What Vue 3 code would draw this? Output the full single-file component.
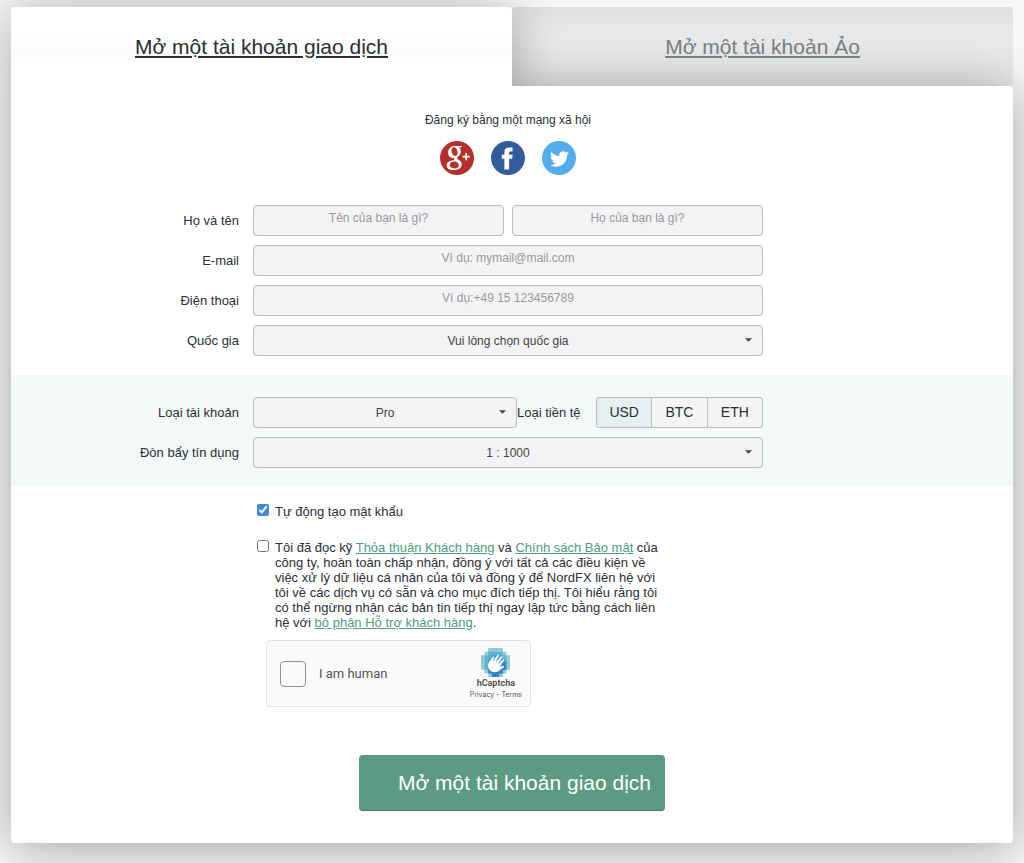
<template>
    <main class="page">
        <nav class="tabs">
            <div class="tab tab-active">
                <a href="#real">Mở một tài khoản giao dịch</a>
            </div>
            <div class="tab tab-idle">
                <a href="#demo">Mở một tài khoản Ảo</a>
            </div>
        </nav>

        <form class="panel" @submit.prevent>
            <section class="social">
                <p>Đăng ký bằng một mạng xã hội</p>
                <div class="social-icons">
                    <a href="#google" aria-label="Google+">
                        <svg viewBox="0 0 34 34">
                            <circle cx="17" cy="17" r="17" fill="#b5302a" />
                            <path
                                fill="#fff"
                                fill-rule="evenodd"
                                d="M14.600 5h7.900l-1.900 1.400h-1.900c1.400 1 2.200 2.500 2.200 4.200 0 2-1 3.300-2.300 4.300-1.300 1-1.500 1.400-1.500 2s.7 1.200 1.600 1.900c1.900 1.300 3.100 2.500 3.100 4.700 0 3-3 5.500-8 5.500-4.300 0-7.200-1.700-7.200-4.600 0-3.300 3.400-5.100 8-5.200-.6-.7-.8-1.300-.5-2.200-3.700.2-6-2.200-6-5.300C8.100 8 11 5 14.600 5zM14 6.200c-1.700 0-2.700 1.500-2.500 3.700.3 2.600 1.700 5 3.700 5 1.600 0 2.600-1.300 2.400-3.500C17.400 8.700 15.900 6.200 14 6.200zM15.300 20.400c-3.400 0-5.700 1.200-5.700 3.400 0 2 1.900 3.600 5 3.600 2.800 0 4.200-1.200 4.200-3.200 0-1.700-1.300-2.600-3-3.800z"
                            />
                            <path fill="none" stroke="#fff" stroke-width="1.7" d="M22.600 15.600h7.200M26.200 12v7.200" />
                        </svg>
                    </a>
                    <a href="#facebook" aria-label="Facebook">
                        <svg viewBox="0 0 34 34">
                            <circle cx="17" cy="17" r="17" fill="#335c9d" />
                            <path
                                fill="#fff"
                                d="M13.400 28.400V17.700h-2.600v-3.900h2.600v-2.500c0-3.300 1.900-4.700 4.900-4.700h3.200v4h-1.900c-1.100 0-1.500.5-1.500 1.500v1.700h3.500l-.4 3.900h-3.100v10.700z"
                            />
                        </svg>
                    </a>
                    <a href="#twitter" aria-label="Twitter">
                        <svg viewBox="0 0 34 34">
                            <circle cx="17" cy="17" r="17" fill="#54aceb" />
                            <path
                                fill="#fff"
                                transform="translate(8 8.5) scale(.79)"
                                d="M23.95 4.57a10 10 0 0 1-2.82.77 4.96 4.96 0 0 0 2.16-2.72c-.95.55-2 .95-3.13 1.18a4.92 4.92 0 0 0-8.38 4.48C7.69 8.1 4.07 6.13 1.64 3.16a4.92 4.92 0 0 0 1.52 6.57 4.9 4.9 0 0 1-2.23-.61v.06a4.92 4.92 0 0 0 3.95 4.83 5 5 0 0 1-2.21.08 4.94 4.94 0 0 0 4.6 3.42A9.87 9.87 0 0 1 0 19.54a13.99 13.99 0 0 0 7.55 2.21c9.05 0 14-7.5 14-13.98 0-.21 0-.42-.02-.63a9.94 9.94 0 0 0 2.46-2.55z"
                            />
                        </svg>
                    </a>
                </div>
            </section>

            <section class="fields">
                <div class="row">
                    <label class="caption" for="first-name">Họ và tên</label>
                    <div class="pair">
                        <input id="first-name" class="control" type="text" placeholder="Tên của bạn là gì?" />
                        <input class="control" type="text" placeholder="Họ của bạn là gì?" aria-label="Họ" />
                    </div>
                </div>
                <div v-for="field in fields" :key="field.id" class="row">
                    <label class="caption" :for="field.id">{{ field.label }}</label>
                    <input :id="field.id" class="control" :type="field.type" :placeholder="field.placeholder" />
                </div>
                <div class="row">
                    <label class="caption" for="country">Quốc gia</label>
                    <div class="select">
                        <select id="country" class="control">
                            <option>Vui lòng chọn quốc gia</option>
                        </select>
                        <svg class="arrow" viewBox="0 0 8 4"><path d="M0 0h8L4 4z" /></svg>
                    </div>
                </div>
            </section>

            <section class="fields account">
                <div class="row">
                    <label class="caption" for="account">Loại tài khoản</label>
                    <div class="account-line">
                        <div class="select">
                            <select id="account" class="control">
                                <option>Pro</option>
                            </select>
                            <svg class="arrow" viewBox="0 0 8 4"><path d="M0 0h8L4 4z" /></svg>
                        </div>
                        <span id="currency-label" class="currency-label">Loại tiền tệ</span>
                        <div class="currencies" role="radiogroup" aria-labelledby="currency-label">
                            <label v-for="item in currencies" :key="item" :class="{ chosen: item === currency }">
                                <input v-model="currency" type="radio" name="currency" :value="item" />
                                {{ item }}
                            </label>
                        </div>
                    </div>
                </div>
                <div class="row">
                    <label class="caption" for="leverage">Đòn bẩy tín dụng</label>
                    <div class="select">
                        <select id="leverage" class="control">
                            <option>1 : 1000</option>
                        </select>
                        <svg class="arrow" viewBox="0 0 8 4"><path d="M0 0h8L4 4z" /></svg>
                    </div>
                </div>
            </section>

            <section class="consent">
                <div class="consent-inner">
                    <div class="check">
                        <input id="auto-password" v-model="autoPassword" type="checkbox" />
                        <label for="auto-password">Tự động tạo mật khẩu</label>
                    </div>
                    <div class="check">
                        <input id="agree" v-model="agree" type="checkbox" />
                        <label for="agree">
                            Tôi đã đọc kỹ <a href="#terms">Thỏa thuận Khách hàng</a> và
                            <a href="#privacy">Chính sách Bảo mật</a> của<br />
                            công ty, hoàn toàn chấp nhận, đồng ý với tất cả các điều kiện về<br />
                            việc xử lý dữ liệu cá nhân của tôi và đồng ý để NordFX liên hệ với<br />
                            tôi về các dịch vụ có sẵn và cho mục đích tiếp thị. Tôi hiểu rằng tôi<br />
                            có thể ngừng nhận các bản tin tiếp thị ngay lập tức bằng cách liên<br />
                            hệ với <a href="#support">bộ phận Hỗ trợ khách hàng</a>.
                        </label>
                    </div>
                    <div class="captcha">
                        <input id="human" type="checkbox" />
                        <label for="human">I am human</label>
                        <div class="captcha-brand">
                            <svg viewBox="0 0 32 32">
                                <path fill="#8fcbd9" d="M8 0h16v4h4v4h4v16h-4v4h-4v4H8v-4H4v-4H0V8h4V4h4z" />
                                <path fill="#5fb4cf" d="M8 4h16v4h4v16h-4v4H8v-4H4V8h4z" />
                                <path fill="#459dce" d="M12 8h12v4h4v12h-4v4H12v-4H8V12h4z" />
                                <path fill="#3682c9" d="M24 16h4v8h-4v4h-4v4h-8v-4H8v-4h12v-4h4z" />
                                <path
                                    fill="#fff"
                                    d="M7.800 20.500c-.6-2.300.1-3.700 1.200-5l3.800-5.300c.8-1 2.200-.3 1.700.9l-1.600 3.200.5.300 4.500-6.700c.8-1.100 2.300-.2 1.700 1l-3.300 6.300.5.300 5.200-6c.9-1 2.200 0 1.500 1.100l-4.400 6.300.4.400 4.800-4.700c.9-.8 2 .2 1.300 1.200l-4.700 6c-.4.6-.2.900.5.700l2.900-.7c1.200-.2 1.600 1.100.6 1.700-2.400 1.300-3.900 3.300-6.300 4.500-4.200 2-9.400.3-10.800-5.500z"
                                />
                            </svg>
                            <strong>hCaptcha</strong>
                            <p><a href="#captcha-privacy">Privacy</a> - <a href="#captcha-terms">Terms</a></p>
                        </div>
                    </div>
                </div>
            </section>

            <button class="submit" type="submit">Mở một tài khoản giao dịch</button>
        </form>
    </main>
</template>

<script setup>
import { ref } from 'vue';

const fields = [
    { id: 'email', label: 'E-mail', type: 'email', placeholder: 'Ví dụ: mymail@mail.com' },
    { id: 'phone', label: 'Điện thoại', type: 'tel', placeholder: 'Ví dụ:+49 15 123456789' },
];

const currencies = ['USD', 'BTC', 'ETH'];
const currency = ref('USD');
const autoPassword = ref(true);
const agree = ref(false);
</script>

<style>
body {
    margin: 0;
    background: #f6f7f9;
}
</style>

<style scoped>
* {
    box-sizing: border-box;
}
.page {
    min-height: 100vh;
    padding: 7px 11px 20px;
    overflow: hidden;
    color: #2b2f34;
    font-family: "Liberation Sans", Arial, sans-serif;
    font-size: 13px;
    line-height: 15px;
}
p {
    margin: 0;
}
input,
select,
button {
    margin: 0;
    font-family: inherit;
}
.tabs {
    display: grid;
    grid-template-columns: 1fr 1fr;
}
.tab {
    border-radius: 4px 4px 0 0;
    font-size: 21px;
    line-height: 26px;
}
.tab a {
    display: flex;
    align-items: center;
    justify-content: center;
    height: 79px;
    border-radius: 4px 4px 0 0;
    color: inherit;
    text-underline-offset: 2px;
}
/* the tab's shadow stays under the panel, its face lies above the panel's shadow */
.tab-active {
    position: relative;
    box-shadow: 0 4px 50px rgba(0, 0, 0, 0.32);
}
.tab-active a {
    position: relative;
    z-index: 2;
    background: linear-gradient(#fff 20px, #fafcfb 50px, #fff 50px);
}
.tab-idle {
    background: linear-gradient(#dfe0e1, #e8e9ea 26px);
    color: #7b8080;
}
.panel {
    position: relative;
    z-index: 1;
    padding: 27px 0 32px;
    border-radius: 0 4px 4px 4px;
    background: #fff;
    box-shadow: 0 4px 50px rgba(0, 0, 0, 0.36);
}
.social {
    display: flex;
    flex-direction: column;
    align-items: center;
    gap: 13px;
    padding-right: 8px;
    font-size: 12px;
}
.social-icons {
    display: flex;
    gap: 17px;
}
.social-icons a,
.social-icons svg {
    display: block;
    width: 34px;
    height: 34px;
}
.fields {
    display: flex;
    flex-direction: column;
    gap: 9px;
    margin-top: 30px;
    padding-right: 8px;
}
.row {
    display: grid;
    grid-template-columns: 1fr minmax(0, 510px) 1fr;
    align-items: center;
}
.caption {
    padding-right: 14px;
    text-align: right;
}
.pair {
    display: grid;
    grid-template-columns: 1fr 1fr;
    gap: 8px;
}
.control {
    display: block;
    width: 100%;
    height: 31px;
    padding: 0 8px;
    border: 1px solid #b9bbbd;
    border-radius: 4px;
    background: #f3f3f5;
    color: #444;
    font-size: 12px;
    text-align: center;
}
input.control {
    padding-bottom: 5px;
}
.control::placeholder {
    color: #999;
    opacity: 1;
}
.select {
    position: relative;
}
select.control {
    appearance: none;
    text-align-last: center;
}
.arrow {
    position: absolute;
    top: 13px;
    right: 11px;
    width: 7px;
    height: 4px;
    fill: #444;
    pointer-events: none;
}
.account {
    margin-top: 19px;
    padding-top: 22px;
    padding-bottom: 18px;
    background: #f4f8f9;
}
.account-line {
    display: flex;
    align-items: center;
}
.account-line .select {
    flex: 1;
}
.currency-label {
    width: 79px;
}
.currencies {
    display: flex;
    width: 167px;
    height: 31px;
    border: 1px solid #b9bbbd;
    border-radius: 3px;
    background: #f4f4f5;
    overflow: hidden;
}
.currencies label {
    display: flex;
    flex: 1;
    align-items: center;
    justify-content: center;
    font-size: 14px;
}
.currencies label + label {
    border-left: 1px solid #b9bbbd;
}
.currencies .chosen {
    background: #e4f1f0;
}
.currencies input {
    position: absolute;
    opacity: 0;
    pointer-events: none;
}
.consent {
    display: grid;
    grid-template-columns: 1fr minmax(0, 510px) 1fr;
    margin-top: 18px;
    padding-right: 8px;
}
.consent-inner {
    grid-column: 2;
    padding-left: 4px;
}
.check {
    display: flex;
    align-items: flex-start;
    gap: 6px;
}
.check + .check {
    margin-top: 21px;
}
.check input {
    flex: none;
    width: 12px;
    height: 12px;
    accent-color: #4389da;
}
.check a {
    color: #529b80;
}
.captcha {
    display: flex;
    align-items: center;
    width: 265px;
    height: 67px;
    margin: 10px 0 0 9px;
    padding: 0 8px 0 13px;
    border: 1px solid #e4e4e4;
    border-radius: 4px;
    background: #fafafa;
    color: #555;
    font-family: Roboto, sans-serif;
    font-size: 13px;
}
.captcha input {
    width: 26px;
    height: 26px;
    margin-right: 13px;
    border: 1px solid #919191;
    border-radius: 4px;
    background: #fafafa;
    appearance: none;
}
.captcha-brand {
    display: flex;
    flex-direction: column;
    align-items: center;
    margin-left: auto;
    padding-top: 2px;
    font-family: Inter, sans-serif;
    font-size: 7px;
    line-height: 12px;
}
.captcha-brand svg {
    width: 29px;
    height: 29px;
}
.captcha-brand strong {
    font-family: Roboto, sans-serif;
    font-size: 9px;
}
.captcha-brand a {
    color: inherit;
    text-decoration: none;
}
.submit {
    display: block;
    height: 56px;
    margin: 48px auto 0;
    padding: 0 14px 0 39px;
    border: 0;
    border-bottom: 1px solid #3f7b66;
    border-radius: 4px;
    background: #5b9b84;
    color: #fff;
    font-size: 21px;
}
</style>
